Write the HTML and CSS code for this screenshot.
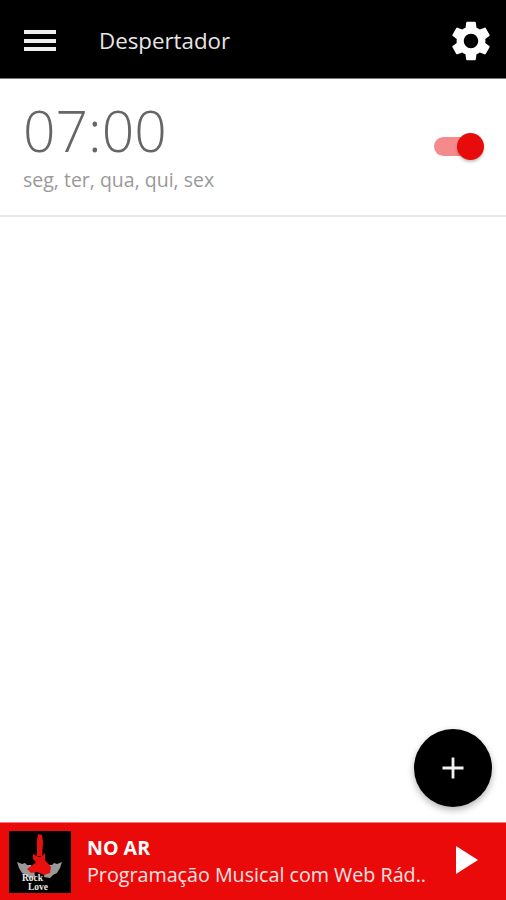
FILE: index.html
```html
<!DOCTYPE html>
<html lang="pt-BR">
<head>
    <meta charset="UTF-8">
    <meta name="viewport" content="width=device-width, initial-scale=1.0">
    <title>Despertador</title>
    <link rel="stylesheet" href="styles.css">
</head>
<body>
    <div class="app">
        <header class="topbar">
            <div class="menu-icon"><span></span><span></span><span></span></div>
            <h1 class="title">Despertador</h1>
            <svg class="gear" viewBox="0 0 24 24" width="48" height="48">
                <path fill="#fff" d="M19.14 12.94c.04-.3.06-.61.06-.94s-.02-.64-.07-.94l2.03-1.58c.18-.14.23-.41.12-.61l-1.92-3.32c-.12-.22-.37-.29-.59-.22l-2.39.96c-.5-.38-1.03-.7-1.62-.94l-.36-2.54c-.04-.24-.24-.41-.48-.41h-3.84c-.24 0-.43.17-.47.41l-.36 2.54c-.59.24-1.13.57-1.62.94l-2.39-.96c-.22-.08-.47 0-.59.22L2.74 8.87c-.12.21-.08.47.12.61l2.03 1.58c-.05.3-.09.63-.09.94s.02.64.07.94l-2.03 1.58c-.18.14-.23.41-.12.61l1.92 3.32c.12.22.37.29.59.22l2.39-.96c.5.38 1.03.7 1.62.94l.36 2.54c.05.24.24.41.48.41h3.84c.24 0 .44-.17.47-.41l.36-2.54c.59-.24 1.13-.56 1.62-.94l2.39.96c.22.08.47 0 .59-.22l1.92-3.32c.12-.22.07-.47-.12-.61l-2.01-1.58zM12 15.6c-1.98 0-3.6-1.62-3.6-3.6s1.62-3.6 3.6-3.6 3.6 1.62 3.6 3.6-1.62 3.6-3.6 3.6z"/>
            </svg>
        </header>

        <main class="content">
            <div class="alarm">
                <div class="alarm-info">
                    <div class="alarm-time">07:00</div>
                    <div class="alarm-days">seg, ter, qua, qui, sex</div>
                </div>
                <div class="switch"><div class="switch-thumb"></div></div>
            </div>
            <div class="fab">
                <svg viewBox="0 0 24 24" width="24" height="24">
                    <path d="M12 1.5v21M1.5 12h21" stroke="#f2f2f2" stroke-width="2.8" fill="none"/>
                </svg>
            </div>
        </main>

        <footer class="player">
            <svg class="logo" viewBox="0 0 62 62" width="62" height="62">
                <rect width="62" height="62" fill="#000"/>
                <!-- asas -->
                <path d="M8 31l5 2 3-1 2 2 4 0 3 4 1 8-6 1-3-3-4-2-3-5z" fill="#999"/>
                <path d="M53 31l-5 2-3-1-2 2-4 0-3 4-1 8 6 1 3-3 4-2 3-5z" fill="#999"/>
                <!-- guitarra -->
                <path d="M28 9l1-6 4 1 1 7-1 14-5 0z" fill="#e8100f"/>
                <path d="M24 23l6 3 3-1 3-3 0 7 6 7-1 6-6 2-7-3-6 1-4-4 7-5 2-2-3-3z" fill="#e8100f"/>
                <text class="logo-text" x="13" y="49.5" font-size="9.5">Rock</text>
                <text class="logo-text" x="19" y="58.5" font-size="9.5">Love</text>
            </svg>
            <div class="player-info">
                <div class="player-label">NO AR</div>
                <div class="player-track">Programação Musical com Web Rád..</div>
            </div>
            <svg class="play" viewBox="0 0 22 28" width="22" height="28">
                <path d="M0 0l22 14L0 28z" fill="#fff"/>
            </svg>
        </footer>
    </div>
</body>
</html>
```

FILE: styles.css
```css
body {
    margin: 0;
    font-family: "Open Sans", "Noto Sans", sans-serif;
    background-color: #fff;
}

.app {
    display: flex;
    flex-direction: column;
    height: 100vh;
    overflow: hidden;
}

/* barra superior */
.topbar {
    height: 79px;
    flex-shrink: 0;
    box-sizing: border-box;
    display: flex;
    align-items: center;
    padding: 3px 11px 0 24px;
    background-color: #000;
    border-bottom: 1px solid #777;
}

.menu-icon {
    width: 32px;
    display: flex;
    flex-direction: column;
    gap: 4.5px;
}

.menu-icon span {
    height: 4px;
    background-color: #eee;
}

.title {
    flex: 1;
    margin: 0 0 0 43px;
    font-size: 22.3px;
    font-weight: 400;
    color: #e6e6e6;
}

/* lista de alarmes */
.content {
    flex: 1;
    position: relative;
}

.alarm {
    height: 138px;
    box-sizing: border-box;
    display: flex;
    justify-content: space-between;
    padding: 0 30px 0 23px;
    border-bottom: 2px solid #e8e8e8;
}

.alarm-info {
    padding-top: 23px;
}

.alarm-time {
    font-size: 57px;
    line-height: 56px;
    font-weight: 300;
    color: #666;
}

.alarm-days {
    font-size: 19.5px;
    line-height: 26px;
    color: #999;
    margin-top: 9px;
}

.switch {
    position: relative;
    align-self: center;
    width: 42px;
    height: 19px;
    margin-bottom: 2px;
    border-radius: 10px;
    background-color: #f48a8c;
}

.switch-thumb {
    position: absolute;
    right: -8px;
    top: -4px;
    width: 27px;
    height: 27px;
    border-radius: 50%;
    background-color: #e80b0b;
    box-shadow: 0 2px 3px rgba(0, 0, 0, 0.25);
}

.fab {
    position: absolute;
    right: 14px;
    bottom: 15px;
    width: 78px;
    height: 78px;
    border-radius: 50%;
    background-color: #000;
    display: flex;
    align-items: center;
    justify-content: center;
    box-shadow: 0 3px 7px rgba(0, 0, 0, 0.3);
}

/* player */
.player {
    height: 78px;
    flex-shrink: 0;
    display: flex;
    align-items: center;
    padding: 0 28px 0 9px;
    background-color: #ea0a0a;
    border-top: 1px solid #f47a7a;
    box-sizing: border-box;
}

.logo {
    flex-shrink: 0;
}

.logo-text {
    font-family: "Liberation Serif", serif;
    font-weight: 700;
    fill: #e8e8e8;
}

.player-info {
    flex: 1;
    margin: 0 0 2px 16px;
    min-width: 0;
    white-space: nowrap;
    overflow: hidden;
}

.player-label {
    font-size: 19.6px;
    line-height: 27px;
    font-weight: 700;
    color: #fff;
}

.player-track {
    font-size: 19.7px;
    line-height: 27px;
    color: #fbe3e3;
}

.play {
    flex-shrink: 0;
    margin-bottom: 3px;
}
```
